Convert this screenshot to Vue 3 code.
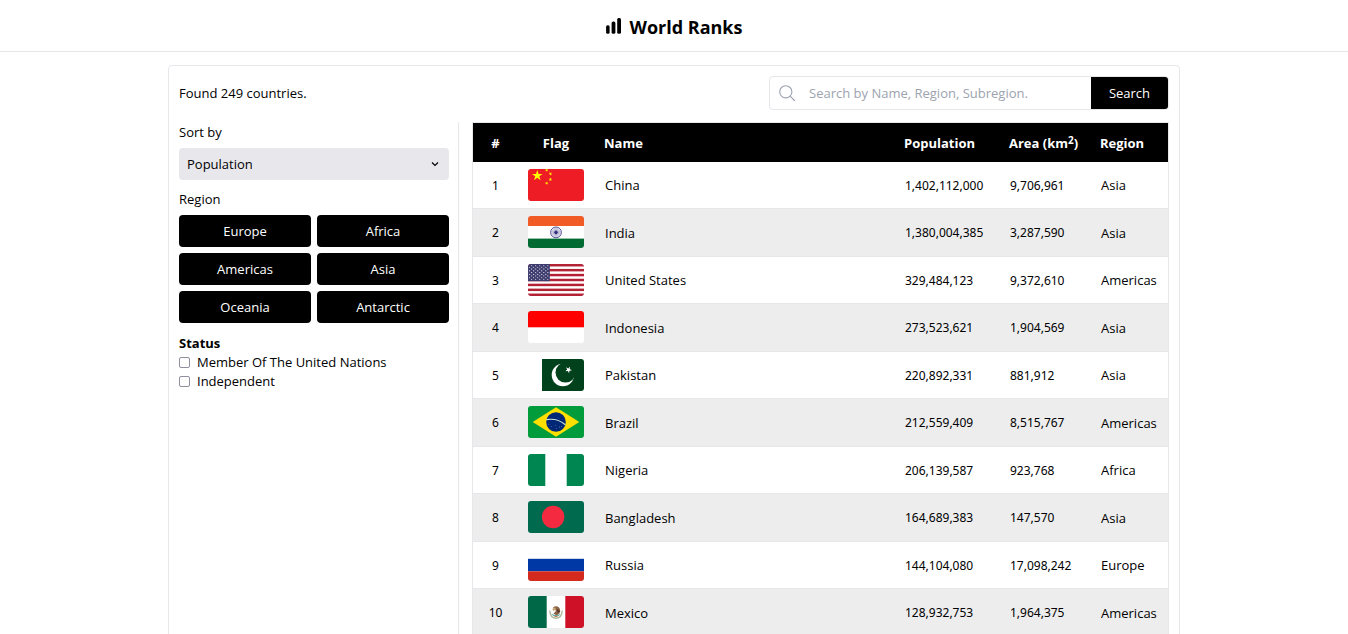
<script setup>
import { ref } from 'vue'

const regions = ['Europe', 'Africa', 'Americas', 'Asia', 'Oceania', 'Antarctic']
const sortBy = ref('Population')
const query = ref('')

const countries = [
  { code: 'cn', name: 'China', population: 1402112000, area: 9706961, region: 'Asia' },
  { code: 'in', name: 'India', population: 1380004385, area: 3287590, region: 'Asia' },
  { code: 'us', name: 'United States', population: 329484123, area: 9372610, region: 'Americas' },
  { code: 'id', name: 'Indonesia', population: 273523621, area: 1904569, region: 'Asia' },
  { code: 'pk', name: 'Pakistan', population: 220892331, area: 881912, region: 'Asia' },
  { code: 'br', name: 'Brazil', population: 212559409, area: 8515767, region: 'Americas' },
  { code: 'ng', name: 'Nigeria', population: 206139587, area: 923768, region: 'Africa' },
  { code: 'bd', name: 'Bangladesh', population: 164689383, area: 147570, region: 'Asia' },
  { code: 'ru', name: 'Russia', population: 144104080, area: 17098242, region: 'Europe' },
  { code: 'mx', name: 'Mexico', population: 128932753, area: 1964375, region: 'Americas' },
]

const format = (n) => n.toLocaleString('en-US')

// Five-pointed star, rotated by `turn` degrees
function star(cx, cy, r, turn = 0) {
  const points = []
  for (let i = 0; i < 10; i++) {
    const radius = i % 2 ? r * 0.382 : r
    const a = ((i * 36 - 90 + turn) * Math.PI) / 180
    points.push(`${(cx + radius * Math.cos(a)).toFixed(2)},${(cy + radius * Math.sin(a)).toFixed(2)}`)
  }
  return points.join(' ')
}

const usStars = []
for (let row = 0; row < 9; row++) {
  const count = row % 2 ? 5 : 6
  for (let i = 0; i < count; i++) {
    usStars.push(star(-0.4 + (row % 2 ? 2 : 0) + i * 4.05, 1.7 + row * 1.72, 0.9))
  }
}
const spokes = Array.from({ length: 12 }, (_, i) => i * 15)
</script>

<template>
  <header class="top">
    <svg class="logo" viewBox="0 0 16 16" aria-hidden="true">
      <rect x="0.1" y="7.2" width="3.5" height="8.6" rx="1.5" />
      <rect x="5.6" y="3.6" width="3.8" height="12.2" rx="1.5" />
      <rect x="11.2" y="0" width="3.8" height="15.8" rx="1.5" />
    </svg>
    <h1>World Ranks</h1>
  </header>

  <main class="card">
    <div class="bar">
      <p>Found 249 countries.</p>
      <form class="search" @submit.prevent>
        <svg class="lens" viewBox="0 0 16 16" aria-hidden="true">
          <circle cx="6.8" cy="6.8" r="6.1" />
          <path d="M11.2 11.2L15.5 15.5" />
        </svg>
        <input v-model="query" type="text" aria-label="Search countries" placeholder="Search by Name, Region, Subregion." />
        <button type="submit">Search</button>
      </form>
    </div>

    <div class="columns">
      <aside class="filters">
        <label for="sort">Sort by</label>
        <div class="select">
          <select id="sort" v-model="sortBy">
            <option>Population</option>
            <option>Name</option>
            <option>Area</option>
          </select>
          <svg viewBox="0 0 8 8" aria-hidden="true"><path d="M1 2.5L4 5.5L7 2.5" /></svg>
        </div>
        <p class="caption">Region</p>
        <div class="regions">
          <button v-for="r in regions" :key="r" type="button">{{ r }}</button>
        </div>
        <h2>Status</h2>
        <label class="check"><input type="checkbox" />Member Of The United Nations</label>
        <label class="check"><input type="checkbox" />Independent</label>
      </aside>

      <table>
        <colgroup>
          <col class="c-rank" />
          <col class="c-flag" />
          <col />
          <col class="c-pop" />
          <col class="c-area" />
          <col class="c-region" />
        </colgroup>
        <thead>
          <tr>
            <th class="mid">#</th>
            <th class="mid">Flag</th>
            <th>Name</th>
            <th>Population</th>
            <th>Area (km<sup>2</sup>)</th>
            <th>Region</th>
          </tr>
        </thead>
        <tbody>
          <tr v-for="(c, i) in countries" :key="c.code">
            <td class="mid num">{{ i + 1 }}</td>
            <td class="mid picture">
              <svg class="flag" viewBox="0 0 56 32" role="img" :aria-label="'Flag of ' + c.name">
                <g v-if="c.code === 'cn'">
                  <rect width="56" height="32" fill="#ee1c25" />
                  <g fill="#ffff00">
                    <polygon :points="star(9.3, 6.7, 5.6)" />
                    <polygon :points="star(18.7, 1.1, 1.9, 23)" />
                    <polygon :points="star(22.4, 4.8, 1.9, 45)" />
                    <polygon :points="star(22.4, 10.4, 1.9)" />
                    <polygon :points="star(18.7, 14.1, 1.9, 20)" />
                  </g>
                </g>
                <g v-else-if="c.code === 'in'">
                  <rect width="56" height="32" fill="#ffffff" />
                  <rect width="56" height="10" fill="#f15b25" />
                  <rect y="22.6" width="56" height="9.4" fill="#006a33" />
                  <g stroke="#2e2c7c" fill="none">
                    <circle cx="28" cy="16.4" r="5.4" stroke-width="0.8" />
                    <path
                      v-for="s in spokes"
                      :key="s"
                      d="M23 16.4H33"
                      stroke-width="0.25"
                      :transform="`rotate(${s} 28 16.4)`"
                    />
                    <circle cx="28" cy="16.4" r="1.2" fill="#2e2c7c" />
                  </g>
                </g>
                <g v-else-if="c.code === 'us'">
                  <rect width="56" height="32" fill="#ffffff" />
                  <rect v-for="n in 7" :key="n" :y="(n - 1) * 4.923" width="56" height="2.46" fill="#b22234" />
                  <rect width="21.8" height="17.2" fill="#3c3b6e" />
                  <polygon v-for="(p, k) in usStars" :key="k" :points="p" fill="#ffffff" />
                </g>
                <g v-else-if="c.code === 'id'">
                  <rect width="56" height="32" fill="#ffffff" />
                  <rect width="56" height="16.3" fill="#ff0000" />
                </g>
                <g v-else-if="c.code === 'pk'">
                  <rect width="56" height="32" fill="#ffffff" />
                  <rect x="14" width="42" height="32" fill="#01411c" />
                  <circle cx="34.9" cy="16" r="11.2" fill="#ffffff" />
                  <circle cx="37.5" cy="13.6" r="10" fill="#01411c" />
                  <polygon :points="star(40.5, 10.7, 3.5, -45)" fill="#ffffff" />
                </g>
                <g v-else-if="c.code === 'br'">
                  <rect width="56" height="32" fill="#009b3a" />
                  <path d="M4.7 16L28 1.3L51.3 16L28 30.7Z" fill="#fedf00" />
                  <circle cx="28" cy="16" r="9.8" fill="#002776" />
                  <path d="M18.4 13.6Q29.5 11.8 37.3 18.8" fill="none" stroke="#cfe3da" stroke-width="1.2" />
                  <g fill="#ffffff" opacity="0.75">
                    <circle cx="20.8" cy="18.2" r="0.4" />
                    <circle cx="23.2" cy="20.4" r="0.4" />
                    <circle cx="27.8" cy="19.2" r="0.4" />
                    <circle cx="28.2" cy="22.6" r="0.4" />
                    <circle cx="31.4" cy="21" r="0.4" />
                    <circle cx="33.4" cy="20.4" r="0.4" />
                    <circle cx="30.8" cy="12" r="0.3" />
                  </g>
                </g>
                <g v-else-if="c.code === 'ng'">
                  <rect width="56" height="32" fill="#008751" />
                  <rect x="17.3" width="21.4" height="32" fill="#ffffff" />
                </g>
                <g v-else-if="c.code === 'bd'">
                  <rect width="56" height="32" fill="#006a4e" />
                  <circle cx="25.1" cy="16" r="11.2" fill="#f42a41" />
                </g>
                <g v-else-if="c.code === 'ru'">
                  <rect width="56" height="32" fill="#ffffff" />
                  <rect y="9.8" width="56" height="12.5" fill="#0039a6" />
                  <rect y="22.3" width="56" height="9.7" fill="#d52b1e" />
                </g>
                <g v-else>
                  <rect width="56" height="32" fill="#ffffff" />
                  <rect width="18.7" height="32" fill="#006847" />
                  <rect x="37.3" width="18.7" height="32" fill="#ce1126" />
                  <path d="M21.8 14.5Q22 21.8 28 22.4Q34 21.8 34.2 14.5" fill="none" stroke="#a9b795" stroke-width="1.3" />
                  <path d="M25 11.5Q28 8.8 31 11.5Q33 14 31.5 17.5L28.5 19.5L25.5 17.5L28 15Z" fill="#8a6244" />
                  <path d="M24.4 12.8L27.2 11.2L28 13.4L25 15Z" fill="#c9a577" />
                  <path d="M29 13L32.4 15.6L29.6 16.4Z" fill="#4c3225" />
                  <path d="M23.6 17.5Q28 20.4 32.4 17.8L31 20H25Z" fill="#6fa9a4" />
                  <path d="M26.5 20.6H29.6" stroke="#bd6a45" stroke-width="1" />
                </g>
              </svg>
            </td>
            <td>{{ c.name }}</td>
            <td class="num">{{ format(c.population) }}</td>
            <td class="num">{{ format(c.area) }}</td>
            <td>{{ c.region }}</td>
          </tr>
        </tbody>
      </table>
    </div>
  </main>
</template>

<style>
body {
  background: #ffffff;
  color: #000000;
  font-family: 'Open Sans', 'Noto Sans', sans-serif;
  font-size: 13px;
  line-height: 20px;
}
html {
  overflow: hidden;
}
</style>

<style scoped>
* {
  box-sizing: border-box;
}
p,
h1,
h2 {
  margin: 0;
}
input,
button,
select {
  margin: 0;
  border: 0;
  font: inherit;
  color: inherit;
}
button {
  background: #000000;
  color: #ffffff;
  cursor: pointer;
}
.top {
  display: flex;
  justify-content: center;
  align-items: center;
  gap: 8px;
  height: 52px;
  padding-top: 1px;
  border-bottom: 1px solid #e5e7eb;
}
.top h1 {
  font-size: 18px;
  line-height: 28px;
  padding-top: 2px;
}
.logo {
  width: 16px;
  height: 16px;
}
.card {
  width: calc(75% + 1px);
  margin: 13px auto 0;
  padding: 10px;
  border: 1px solid #e5e7eb;
  border-radius: 4px;
}
.bar {
  display: flex;
  justify-content: space-between;
  align-items: center;
  margin-bottom: 12px;
}
.search {
  display: flex;
  align-items: center;
  width: 400px;
  height: 34px;
  border: 1px solid #e5e7eb;
  border-radius: 4px;
  overflow: hidden;
}
.lens {
  flex: none;
  width: 16px;
  height: 16px;
  margin: 0 14px 0 9px;
  fill: none;
  stroke: #9ca3af;
  stroke-width: 1.1;
  stroke-linecap: round;
}
.search input {
  flex: 1;
  min-width: 0;
  padding: 0;
  outline: 0;
  background: transparent;
}
.search input::placeholder {
  color: #9ca3af;
  opacity: 1;
}
.search button {
  width: 77px;
  height: 100%;
}
.columns {
  display: flex;
  align-items: stretch;
  gap: 13px;
}
.filters {
  flex: none;
  width: 280px;
  padding-right: 9px;
  border-right: 1px solid #e5e7eb;
}
.filters > label,
.caption {
  display: block;
}
.select {
  position: relative;
  margin: 6px 0 9px;
}
.select select {
  display: block;
  width: 100%;
  height: 32px;
  padding: 0 8px;
  border-radius: 4px;
  background: #e8e8ec;
  appearance: none;
}
.select svg {
  position: absolute;
  right: 10px;
  top: 12px;
  width: 8px;
  height: 8px;
  fill: none;
  stroke: #000000;
  stroke-width: 1.2;
  pointer-events: none;
}
.regions {
  display: grid;
  grid-template-columns: 1fr 1fr;
  gap: 6px;
  margin: 6px 0 10px;
}
.regions button {
  height: 32px;
  padding: 0;
  border-radius: 4px;
}
h2 {
  font-size: 13px;
  line-height: 20px;
}
.filters > .check {
  display: flex;
  align-items: center;
  gap: 7px;
  line-height: 19px;
}
.check input {
  width: 11px;
  height: 11px;
  appearance: none;
  border: 1px solid #8f8f9d;
  border-radius: 2px;
  background: #ffffff;
}
.check input:checked {
  background: #000000;
}
table {
  flex: 1;
  min-width: 0;
  table-layout: fixed;
  border: 1px solid #e5e7eb;
  border-spacing: 0;
}
.c-rank {
  width: 45px;
}
.c-flag {
  width: 76px;
}
.c-pop {
  width: 105px;
}
.c-area {
  width: 91px;
}
.c-region {
  width: 78px;
}
thead tr {
  height: 39px;
  background: #000000;
  color: #ffffff;
}
tbody tr {
  height: 47px;
}
tbody tr:nth-child(even) {
  height: 48px;
  background: #ededed;
}
th,
td {
  padding: 0 0 0 10px;
  text-align: left;
  vertical-align: middle;
  white-space: nowrap;
}
td {
  padding-left: 11px;
  border-bottom: 1px solid #e5e7eb;
}
.num {
  padding-top: 1px;
  font-family: 'Noto Sans', 'Open Sans', sans-serif;
  font-size: 12px;
}
.mid {
  padding-left: 0;
  text-align: center;
}
.picture {
  padding-top: 7px;
  vertical-align: top;
}
sup {
  font-size: 10px;
  line-height: 0;
  vertical-align: 4px;
}
.flag {
  display: block;
  width: 56px;
  height: 32px;
  margin: 0 auto;
  border-radius: 3px;
}
</style>
